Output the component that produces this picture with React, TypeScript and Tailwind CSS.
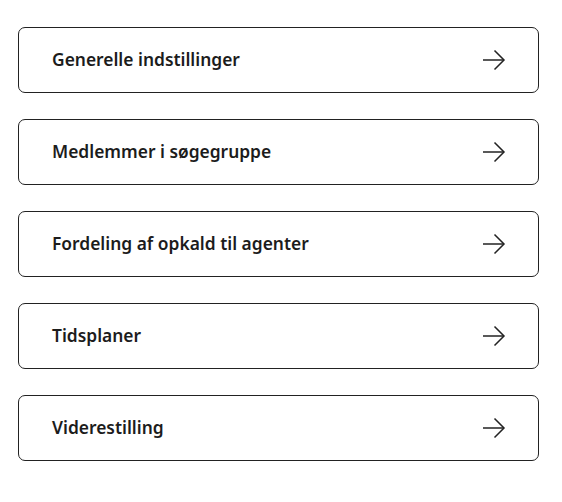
const items = [
  'Generelle indstillinger',
  'Medlemmer i søgegruppe',
  'Fordeling af opkald til agenter',
  'Tidsplaner',
  'Viderestilling',
];

function ArrowRight() {
  return (
    <svg width="24" height="22" viewBox="0 0 24 22" fill="none" stroke="#222" strokeWidth="1.5">
      <path d="M1 11h21" />
      <path d="M12.5 1.5L22 11l-9.5 9.5" />
    </svg>
  );
}

export default function App() {
  return (
    <div className="min-h-screen bg-white pt-[27px] pl-[18px]" style={{ fontFamily: '"Noto Sans", sans-serif' }}>
      <div className="flex w-[521px] flex-col gap-[26px]">
        {items.map((label) => (
          <button
            key={label}
            className="flex h-[66px] items-center justify-between rounded-[7px] border border-[#222] bg-white pl-[33px] pr-[32px] text-left"
          >
            <span className="mb-[2px] text-[17.4px] font-semibold text-[#1c1c1c]">{label}</span>
            <ArrowRight />
          </button>
        ))}
      </div>
    </div>
  );
}
